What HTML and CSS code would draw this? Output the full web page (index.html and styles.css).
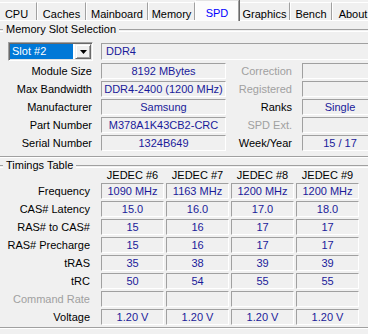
FILE: index.html
```html
<!DOCTYPE html>
<html lang="en">
<head>
  <meta charset="UTF-8" />
  <title>CPU-Z SPD</title>
  <link rel="stylesheet" href="styles.css">
</head>
<body>
  <div class="tabs">
    <div class="tab">CPU</div>
    <div class="tab">Caches</div>
    <div class="tab">Mainboard</div>
    <div class="tab">Memory</div>
    <div class="tab active">SPD</div>
    <div class="tab">Graphics</div>
    <div class="tab">Bench</div>
    <div class="tab">About</div>
  </div>

  <div class="panel">
    <div class="group">
      <div class="group-title"><span>Memory Slot Selection</span></div>
      <div class="slot-row">
        <div class="combo">
          <span class="combo-value">Slot #2</span>
          <span class="combo-btn">
            <svg width="7" height="4" viewBox="0 0 7 4"><path d="M0 0h7L3.5 4z" fill="#000"/></svg>
          </span>
        </div>
        <div class="field wide">DDR4</div>
      </div>
      <div class="info-grid">
        <div class="label">Module Size</div>
        <div class="field">8192 MBytes</div>
        <div class="label dim">Correction</div>
        <div class="field"></div>

        <div class="label">Max Bandwidth</div>
        <div class="field">DDR4-2400 (1200 MHz)</div>
        <div class="label dim">Registered</div>
        <div class="field"></div>

        <div class="label">Manufacturer</div>
        <div class="field">Samsung</div>
        <div class="label">Ranks</div>
        <div class="field">Single</div>

        <div class="label">Part Number</div>
        <div class="field">M378A1K43CB2-CRC</div>
        <div class="label dim">SPD Ext.</div>
        <div class="field"></div>

        <div class="label">Serial Number</div>
        <div class="field">1324B649</div>
        <div class="label">Week/Year</div>
        <div class="field">15 / 17</div>
      </div>
    </div>

    <div class="group timings">
      <div class="group-title"><span>Timings Table</span></div>
      <div class="timing-grid">
        <div></div>
        <div class="head">JEDEC #6</div>
        <div class="head">JEDEC #7</div>
        <div class="head">JEDEC #8</div>
        <div class="head">JEDEC #9</div>

        <div class="label">Frequency</div>
        <div class="field">1090 MHz</div>
        <div class="field">1163 MHz</div>
        <div class="field">1200 MHz</div>
        <div class="field">1200 MHz</div>

        <div class="label">CAS# Latency</div>
        <div class="field">15.0</div>
        <div class="field">16.0</div>
        <div class="field">17.0</div>
        <div class="field">18.0</div>

        <div class="label">RAS# to CAS#</div>
        <div class="field">15</div>
        <div class="field">16</div>
        <div class="field">17</div>
        <div class="field">17</div>

        <div class="label">RAS# Precharge</div>
        <div class="field">15</div>
        <div class="field">16</div>
        <div class="field">17</div>
        <div class="field">17</div>

        <div class="label">tRAS</div>
        <div class="field">35</div>
        <div class="field">38</div>
        <div class="field">39</div>
        <div class="field">39</div>

        <div class="label">tRC</div>
        <div class="field">50</div>
        <div class="field">54</div>
        <div class="field">55</div>
        <div class="field">55</div>

        <div class="label dim">Command Rate</div>
        <div class="field"></div>
        <div class="field"></div>
        <div class="field"></div>
        <div class="field"></div>

        <div class="label">Voltage</div>
        <div class="field">1.20 V</div>
        <div class="field">1.20 V</div>
        <div class="field">1.20 V</div>
        <div class="field">1.20 V</div>
      </div>
    </div>
  </div>
</body>
</html>
```

FILE: styles.css
```css
body {
  margin: 0;
  width: 368px;
  height: 334px;
  overflow: hidden;
  background: #f0f0f0;
  color: #000;
  font-family: "Liberation Sans", Arial, sans-serif;
  font-size: 11px;
}

/* tab strip */
.tabs {
  display: flex;
  align-items: flex-end;
  height: 20px;
  white-space: nowrap;
}

.tab {
  flex: none;
  box-sizing: border-box;
  height: 18px;
  padding-top: 3px;
  line-height: 16px;
  text-align: center;
  border-top: 1px solid #fff;
  border-left: 1px solid #fff;
  border-right: 1px solid #a0a0a0;
  box-shadow: 1px 0 #696969;
}

.tab:nth-child(1) { width: 41px; margin-left: -4px; }
.tab:nth-child(2) { width: 49px; }
.tab:nth-child(3) { width: 62px; }
.tab:nth-child(4) { width: 47px; }
.tab:nth-child(5) { width: 44px; }
.tab:nth-child(6) { width: 51px; }
.tab:nth-child(7) { width: 42px; }
.tab:nth-child(8) { width: 42px; }

.tab.active {
  position: relative;
  z-index: 1;
  height: 21px;
  margin-bottom: -1px;
  padding-top: 4px;
  border-top-color: #e3e3e3;
  background: #fcfcfc;
  color: #0000ff;
}

.panel {
  width: 380px;
  border-top: 1px solid #fff;
}

/* group boxes */
.group {
  margin: 0 -3px;
  padding: 0 3px 5px;
  border-bottom: 1px solid #a0a0a0;
  box-shadow: 0 1px #fff;
}

.group-title {
  display: flex;
  height: 13px;
  margin-top: 2px;
  line-height: 13px;
}

.group-title::before,
.group-title::after {
  content: "";
  height: 1px;
  margin-top: 6px;
  border-top: 1px solid #a0a0a0;
  border-bottom: 1px solid #fff;
}

.group-title::before {
  width: 6px;
  margin-left: -3px;
  margin-right: 2px;
}

.group-title::after {
  flex: 1;
  margin-left: 2px;
}

.group-title span {
  padding: 0 1px;
}

/* slot selection */
.slot-row {
  display: flex;
  align-items: center;
  margin-top: 6px;
}

.combo {
  display: flex;
  box-sizing: border-box;
  width: 85px;
  height: 19px;
  margin-left: 8px;
  margin-right: 8px;
  border: 1px solid;
  border-color: #a0a0a0 #fff #fff #a0a0a0;
  box-shadow: inset 1px 1px #696969, inset -1px -1px #e3e3e3;
  background: #fff;
  padding: 1px;
}

.combo-value {
  width: 63px;
  margin-right: 2px;
  padding-left: 2px;
  box-sizing: border-box;
  background: #0078d7;
  color: #fff;
  line-height: 15px;
}

.combo-btn {
  display: flex;
  align-items: center;
  justify-content: center;
  width: 16px;
  box-sizing: border-box;
  background: #f0f0f0;
  border: 1px solid;
  border-color: #f0f0f0 #696969 #696969 #f0f0f0;
  box-shadow: inset 1px 1px #fff, inset -1px -1px #a0a0a0;
}

.field {
  box-sizing: border-box;
  height: 16px;
  line-height: 14px;
  border: 1px solid;
  border-color: #a0a0a0 #fff #fff #a0a0a0;
  color: #1a1a9a;
  text-align: center;
  white-space: nowrap;
  overflow: hidden;
}

.field.wide {
  width: 280px;
  height: 17px;
  padding-left: 4px;
  text-align: left;
}

.label {
  padding-right: 9px;
  line-height: 16px;
  text-align: right;
  white-space: nowrap;
}

.label.dim {
  color: #a0a0a0;
}

.info-grid {
  display: grid;
  grid-template-columns: 101px 125px 76px 76px;
  grid-auto-rows: 16px;
  row-gap: 2px;
  margin-top: 2px;
}

.info-grid .label:nth-child(4n+3) {
  padding-right: 10px;
}

/* timings */
.group.timings {
  margin-top: 2px;
  padding-bottom: 2px;
}

.timings .group-title {
  height: 12px;
  margin-top: 0;
  line-height: 12px;
}

.timing-grid {
  display: grid;
  grid-template-columns: 99px repeat(4, 63px);
  grid-template-rows: 10px;
  grid-auto-rows: 16px;
  column-gap: 2px;
  row-gap: 2px;
}

.head {
  line-height: 8px;
  text-align: center;
  white-space: nowrap;
}
```
